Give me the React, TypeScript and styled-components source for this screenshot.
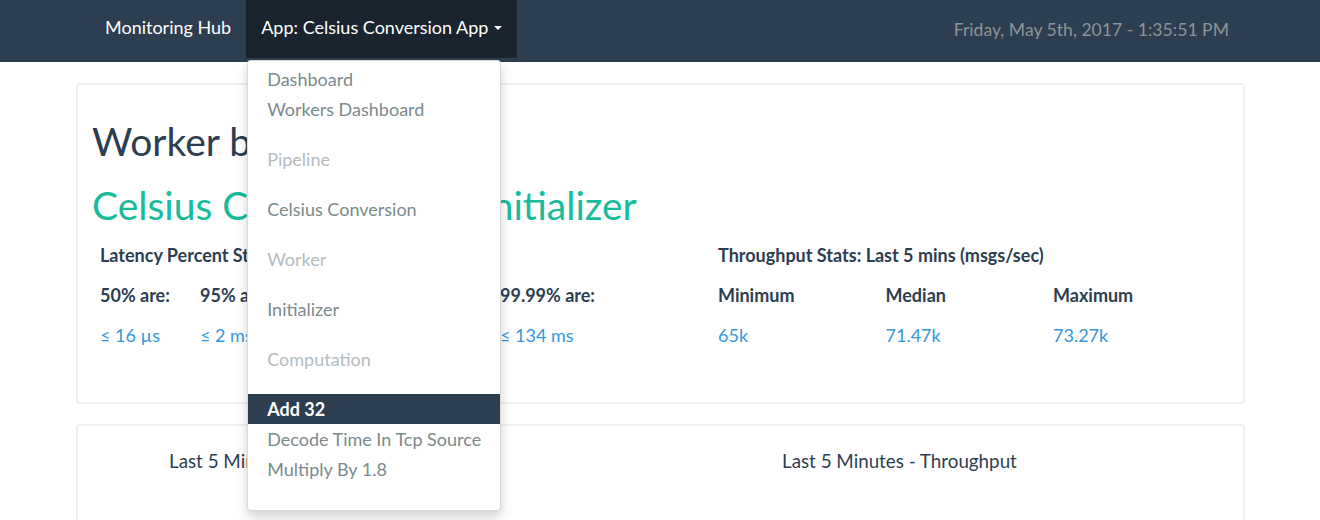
import React from "react";
import styled, { createGlobalStyle } from "styled-components";

const Global = createGlobalStyle`
  html, body { margin: 0; padding: 0; background: #ffffff; }
  body { font-family: Lato, "Open Sans", "Liberation Sans", sans-serif; color: #2c3e50; }
  * { box-sizing: border-box; }
`;

const Page = styled.div`
  width: 1320px;
  height: 520px;
  overflow: hidden;
  background: #fff;
`;

const NavBar = styled.nav`
  height: 62px;
  background: #2c3e50;
  display: flex;
  align-items: flex-start;
  padding-left: 90px;
  padding-right: 91px;
`;

const NavItem = styled.div<{ $active?: boolean }>`
  position: relative;
  height: 58px;
  padding: 0 15px 4px;
  display: flex;
  align-items: center;
  font-size: 18px;
  color: #ffffff;
  background: ${(p) => (p.$active ? "#1a242f" : "transparent")};
  white-space: nowrap;
`;

const Caret = styled.span`
  display: inline-block;
  width: 0;
  height: 0;
  margin-left: 6px;
  margin-top: 2px;
  border-top: 4px solid #fff;
  border-left: 4px solid transparent;
  border-right: 4px solid transparent;
`;

const DateText = styled.div`
  margin-left: auto;
  height: 58px;
  display: flex;
  align-items: center;
  font-size: 17.6px;
  color: #8e9499;
`;

const Menu = styled.div`
  position: absolute;
  top: 60px;
  left: 1px;
  width: 254px;
  background: #fff;
  border: 1px solid rgba(0, 0, 0, 0.15);
  border-radius: 4px;
  box-shadow: 0 6px 12px rgba(0, 0, 0, 0.175);
  padding: 3px 0 6px;
  z-index: 10;
`;

const MenuItem = styled.div<{ $kind?: "header" | "active" }>`
  height: 30px;
  line-height: 30px;
  padding: 0 19px;
  font-size: 18px;
  white-space: nowrap;
  color: ${(p) => (p.$kind === "header" ? "#b4bcc2" : p.$kind === "active" ? "#ffffff" : "#7b8a8b")};
  background: ${(p) => (p.$kind === "active" ? "#2c3e50" : "transparent")};
  font-weight: ${(p) => (p.$kind === "active" ? 700 : 400)};
`;

const MenuGap = styled.div`
  height: 20px;
`;

const Main = styled.main`
  width: 1170px;
  margin: 21px auto 0;
  padding-left: 1px;
`;

const Panel = styled.section<{ $height: number }>`
  height: ${(p) => p.$height}px;
  border: 2px solid #ecf0f1;
  border-radius: 4px;
  background: #fff;
  margin-bottom: 20px;
`;

const InfoBody = styled.div`
  padding: 24px 0 0 14px;
`;

const Title = styled.h1<{ $green?: boolean }>`
  margin: 0;
  font-size: 39px;
  font-weight: 400;
  line-height: 64px;
  color: ${(p) => (p.$green ? "#18bc9c" : "#2c3e50")};
  white-space: nowrap;
`;

const StatsWrap = styled.div`
  display: flex;
  padding-left: 8px;
  margin-top: -2px;
`;

const StatsBlock = styled.div<{ $width: number }>`
  width: ${(p) => p.$width}px;
`;

const StatsTitle = styled.div`
  font-size: 18px;
  font-weight: 700;
  line-height: 40px;
  height: 40px;
  white-space: nowrap;
`;

const StatsGrid = styled.div<{ $col: number; $n: number }>`
  display: grid;
  grid-template-columns: repeat(${(p) => p.$n}, ${(p) => p.$col}px);
`;

const StatHead = styled.div`
  font-size: 18px;
  font-weight: 700;
  line-height: 40px;
  white-space: nowrap;
`;

const StatValue = styled.div`
  font-size: 18px;
  color: #3498db;
  line-height: 40px;
  white-space: nowrap;
`;

const ChartRow = styled.div`
  display: grid;
  grid-template-columns: 613px 1fr;
  padding: 23px 0 0 91px;
`;

const ChartTitle = styled.div`
  font-size: 18.8px;
  line-height: 24px;
  white-space: nowrap;
`;

const latency = [
  ["50% are:", "≤ 16 µs"],
  ["95% are:", "≤ 2 ms"],
  ["99% are:", "≤ 8 ms"],
  ["99.9% are:", "≤ 67 ms"],
  ["99.99% are:", "≤ 134 ms"],
];

const throughput = [
  ["Minimum", "65k"],
  ["Median", "71.47k"],
  ["Maximum", "73.27k"],
];

export default function App() {
  return (
    <Page>
      <Global />
      <NavBar>
        <NavItem>Monitoring Hub</NavItem>
        <NavItem $active>
          App: Celsius Conversion App <Caret />
          <Menu>
            <MenuItem>Dashboard</MenuItem>
            <MenuItem>Workers Dashboard</MenuItem>
            <MenuGap />
            <MenuItem $kind="header">Pipeline</MenuItem>
            <MenuGap />
            <MenuItem>Celsius Conversion</MenuItem>
            <MenuGap />
            <MenuItem $kind="header">Worker</MenuItem>
            <MenuGap />
            <MenuItem>Initializer</MenuItem>
            <MenuGap />
            <MenuItem $kind="header">Computation</MenuItem>
            <MenuGap />
            <MenuItem $kind="active">Add 32</MenuItem>
            <MenuItem>Decode Time In Tcp Source</MenuItem>
            <MenuItem>Multiply By 1.8</MenuItem>
            <MenuGap />
          </Menu>
        </NavItem>
        <DateText>Friday, May 5th, 2017 - 1:35:51 PM</DateText>
      </NavBar>
      <Main>
        <Panel $height={321}>
          <InfoBody>
            <Title>Worker by Pipeline</Title>
            <Title $green>Celsius Conversion =&gt; Initializer</Title>
            <StatsWrap>
              <StatsBlock $width={618}>
                <StatsTitle>Latency Percent Stats: Last 5 mins</StatsTitle>
                <StatsGrid $col={100} $n={5}>
                  {latency.map(([h]) => (
                    <StatHead key={h}>{h}</StatHead>
                  ))}
                  {latency.map(([h, v]) => (
                    <StatValue key={h + "v"}>{v}</StatValue>
                  ))}
                </StatsGrid>
              </StatsBlock>
              <StatsBlock $width={520}>
                <StatsTitle>Throughput Stats: Last 5 mins (msgs/sec)</StatsTitle>
                <StatsGrid $col={167.5} $n={3}>
                  {throughput.map(([h]) => (
                    <StatHead key={h}>{h}</StatHead>
                  ))}
                  {throughput.map(([h, v]) => (
                    <StatValue key={h + "v"}>{v}</StatValue>
                  ))}
                </StatsGrid>
              </StatsBlock>
            </StatsWrap>
          </InfoBody>
        </Panel>
        <Panel $height={200}>
          <ChartRow>
            <ChartTitle>Last 5 Minutes - Latency</ChartTitle>
            <ChartTitle>Last 5 Minutes - Throughput</ChartTitle>
          </ChartRow>
        </Panel>
      </Main>
    </Page>
  );
}
